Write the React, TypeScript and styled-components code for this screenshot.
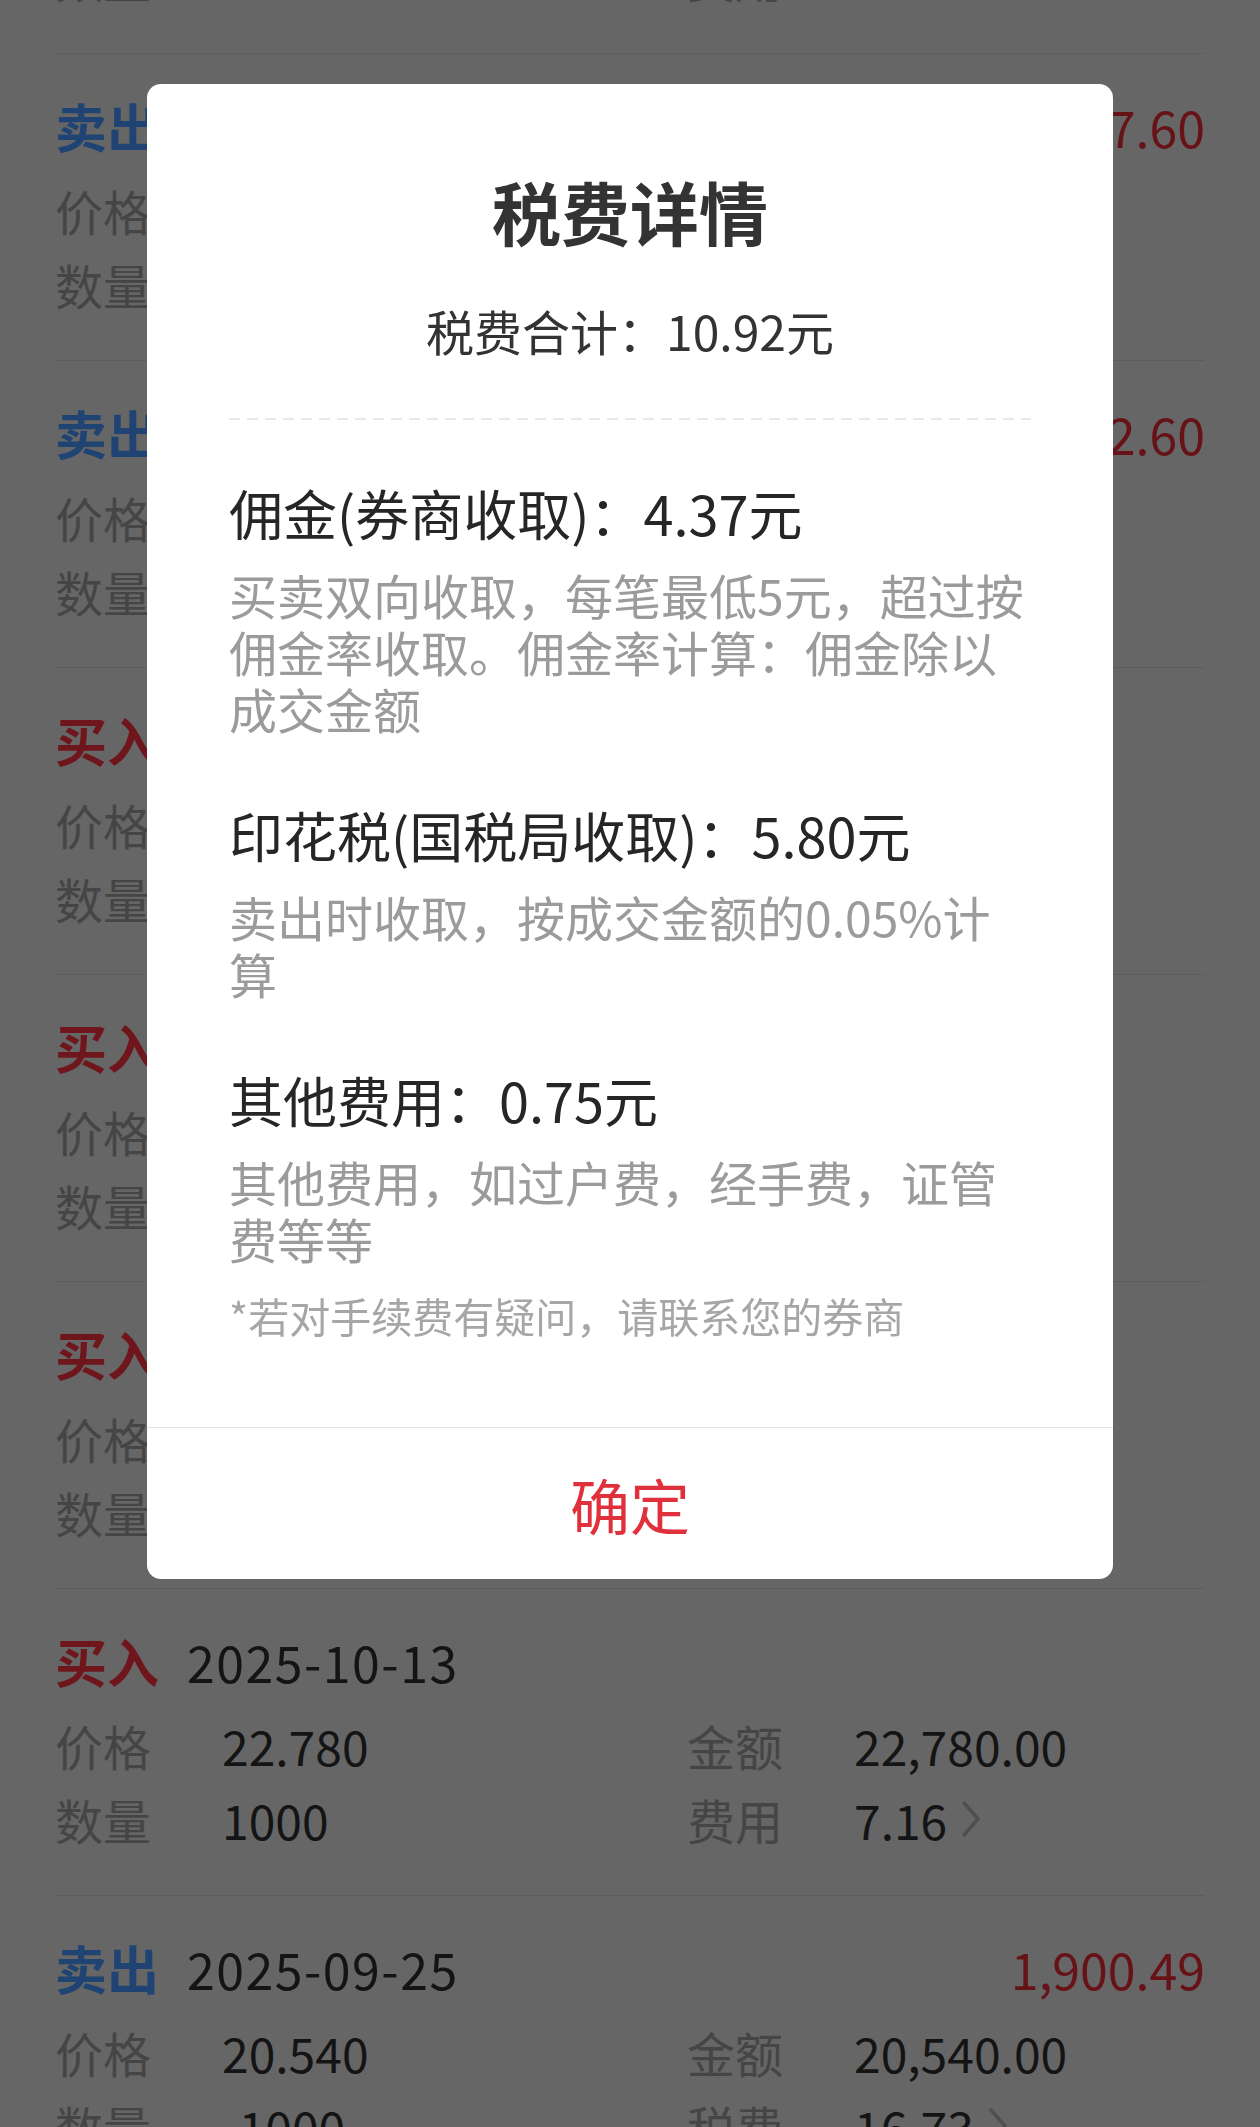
import React from 'react';
import styled, { createGlobalStyle } from 'styled-components';

type Trade = {
  side: 'buy' | 'sell';
  date: string;
  profit?: string;
  price: string;
  qty: string;
  amount: string;
  fee: string;
};

const trades: Trade[] = [
  { side: 'buy', date: '2025-11-20', price: '23.150', qty: '500', amount: '11,575.00', fee: '5.00' },
  { side: 'sell', date: '2025-11-18', profit: '1,237.60', price: '24.560', qty: '-500', amount: '12,280.00', fee: '11.14' },
  { side: 'sell', date: '2025-11-05', profit: '862.60', price: '23.980', qty: '-500', amount: '11,990.00', fee: '10.99' },
  { side: 'buy', date: '2025-10-30', price: '22.410', qty: '500', amount: '11,205.00', fee: '5.00' },
  { side: 'buy', date: '2025-10-22', price: '22.050', qty: '500', amount: '11,025.00', fee: '5.00' },
  { side: 'buy', date: '2025-10-17', price: '22.630', qty: '500', amount: '11,315.00', fee: '5.00' },
  { side: 'buy', date: '2025-10-13', price: '22.780', qty: '1000', amount: '22,780.00', fee: '7.16' },
  { side: 'sell', date: '2025-09-25', profit: '1,900.49', price: '20.540', qty: '-1000', amount: '20,540.00', fee: '16.73' },
];

const feeItems = [
  {
    title: '佣金(券商收取)：4.37元',
    desc: '买卖双向收取，每笔最低5元，超过按佣金率收取。佣金率计算：佣金除以成交金额',
  },
  {
    title: '印花税(国税局收取)：5.80元',
    desc: '卖出时收取，按成交金额的0.05%计算',
  },
  {
    title: '其他费用：0.75元',
    desc: '其他费用，如过户费，经手费，证管费等等',
  },
];

const Chevron = () => (
  <ChevronIcon width='20' height='36' viewBox='0 0 20 36' fill='none'>
    <path d='M3 2 L17 18 L3 34' stroke='#4f4f4f' strokeWidth='3.5' strokeLinecap='round' strokeLinejoin='round' />
  </ChevronIcon>
);

const App = () => {
  return (
    <>
      <GlobalStyle />
      <Page>
        <TradeList>
          {trades.map(t => (
            <TradeRow key={t.date}>
              <RowHeader>
                <Side $sell={t.side === 'sell'}>{t.side === 'sell' ? '卖出' : '买入'}</Side>
                <DateText>{t.date}</DateText>
                {t.profit && <Profit>{t.profit}</Profit>}
              </RowHeader>
              <Details>
                <Cell>
                  <Label>价格</Label>
                  <Value>{t.price}</Value>
                </Cell>
                <Cell>
                  <Label>金额</Label>
                  <Value>{t.amount}</Value>
                </Cell>
                <Cell>
                  <Label>数量</Label>
                  <Value>{t.qty}</Value>
                </Cell>
                <Cell>
                  <Label>{t.side === 'sell' ? '税费' : '费用'}</Label>
                  <Value>{t.fee}</Value>
                  <Chevron />
                </Cell>
              </Details>
            </TradeRow>
          ))}
        </TradeList>
      </Page>

      <Backdrop>
        <Dialog>
          <DialogBody>
            <Title>税费详情</Title>
            <Total>税费合计：10.92元</Total>
            <DashedLine />
            {feeItems.map((item, i) => (
              <FeeItem key={item.title} $first={i === 0}>
                <FeeTitle>{item.title}</FeeTitle>
                <FeeDesc>{item.desc}</FeeDesc>
              </FeeItem>
            ))}
            <Note>*若对手续费有疑问，请联系您的券商</Note>
          </DialogBody>
          <ConfirmButton>确定</ConfirmButton>
        </Dialog>
      </Backdrop>
    </>
  );
};

export default App;

const GlobalStyle = createGlobalStyle`
  html, body {
    margin: 0;
    padding: 0;
    height: 100%;
    overflow: hidden;
  }
  body {
    background: #666666;
    font-family: "Noto Sans CJK SC", "Noto Sans", sans-serif;
  }
  * {
    box-sizing: border-box;
  }
`;

const Page = styled.div`
  padding: 0 55px;
`;

// the list is scrolled: the first record sits mostly above the window
const TradeList = styled.div`
  margin-top: -253px;
`;

const TradeRow = styled.div`
  padding: 42px 0 39px;
  border-bottom: 1px solid #5d5d5d;
`;

const RowHeader = styled.div`
  display: flex;
  align-items: center;
  height: 60px;
`;

const Side = styled.span<{ $sell: boolean }>`
  width: 132px;
  font-size: 52px;
  font-weight: 700;
  line-height: 60px;
  color: ${p => (p.$sell ? '#1f4473' : '#6f161d')};
`;

const DateText = styled.span`
  font-size: 50px;
  line-height: 60px;
  letter-spacing: 1.5px;
  color: #141414;
`;

const Profit = styled.span`
  margin-left: auto;
  font-size: 50px;
  line-height: 60px;
  color: #661217;
`;

const Details = styled.div`
  display: grid;
  grid-template-columns: 632px 1fr;
  margin-top: 17px;
`;

const Cell = styled.div`
  display: flex;
  align-items: center;
  height: 74px;
`;

const Label = styled.span`
  width: 167px;
  font-size: 48px;
  color: #454545;
`;

const Value = styled.span`
  font-size: 48px;
  color: #141414;
`;

const ChevronIcon = styled.svg`
  margin-left: 14px;
`;

const Backdrop = styled.div`
  position: fixed;
  inset: 0;
  display: flex;
  justify-content: center;
  align-items: flex-start;
  padding-top: 84px;
`;

const Dialog = styled.div`
  width: 966px;
  background: #ffffff;
  border-radius: 14px;
  overflow: hidden;
`;

const DialogBody = styled.div`
  padding: 87px 82px 88px;
`;

const Title = styled.h1`
  margin: 0;
  text-align: center;
  font-size: 69px;
  font-weight: 700;
  line-height: 80px;
  color: #333333;
`;

const Total = styled.div`
  margin-top: 51px;
  text-align: center;
  font-size: 48px;
  line-height: 56px;
  color: #333333;
`;

const DashedLine = styled.div`
  height: 2px;
  margin-top: 60px;
  background: repeating-linear-gradient(to right, #e8e8e8 0 11px, transparent 11px 18px);
`;

const FeeItem = styled.div<{ $first: boolean }>`
  margin-top: ${p => (p.$first ? '61px' : '66px')};
`;

const FeeTitle = styled.div`
  font-size: 54px;
  line-height: 64px;
  color: #262626;
`;

const FeeDesc = styled.div`
  margin-top: 21px;
  font-size: 48px;
  line-height: 57px;
  color: #9b9b9b;
`;

const Note = styled.div`
  margin-top: 24px;
  font-size: 41px;
  line-height: 48px;
  color: #a6a6a6;
`;

const ConfirmButton = styled.div`
  display: flex;
  align-items: center;
  justify-content: center;
  height: 152px;
  border-top: 1px solid #e6e6e6;
  font-size: 60px;
  color: #e0303c;
`;
